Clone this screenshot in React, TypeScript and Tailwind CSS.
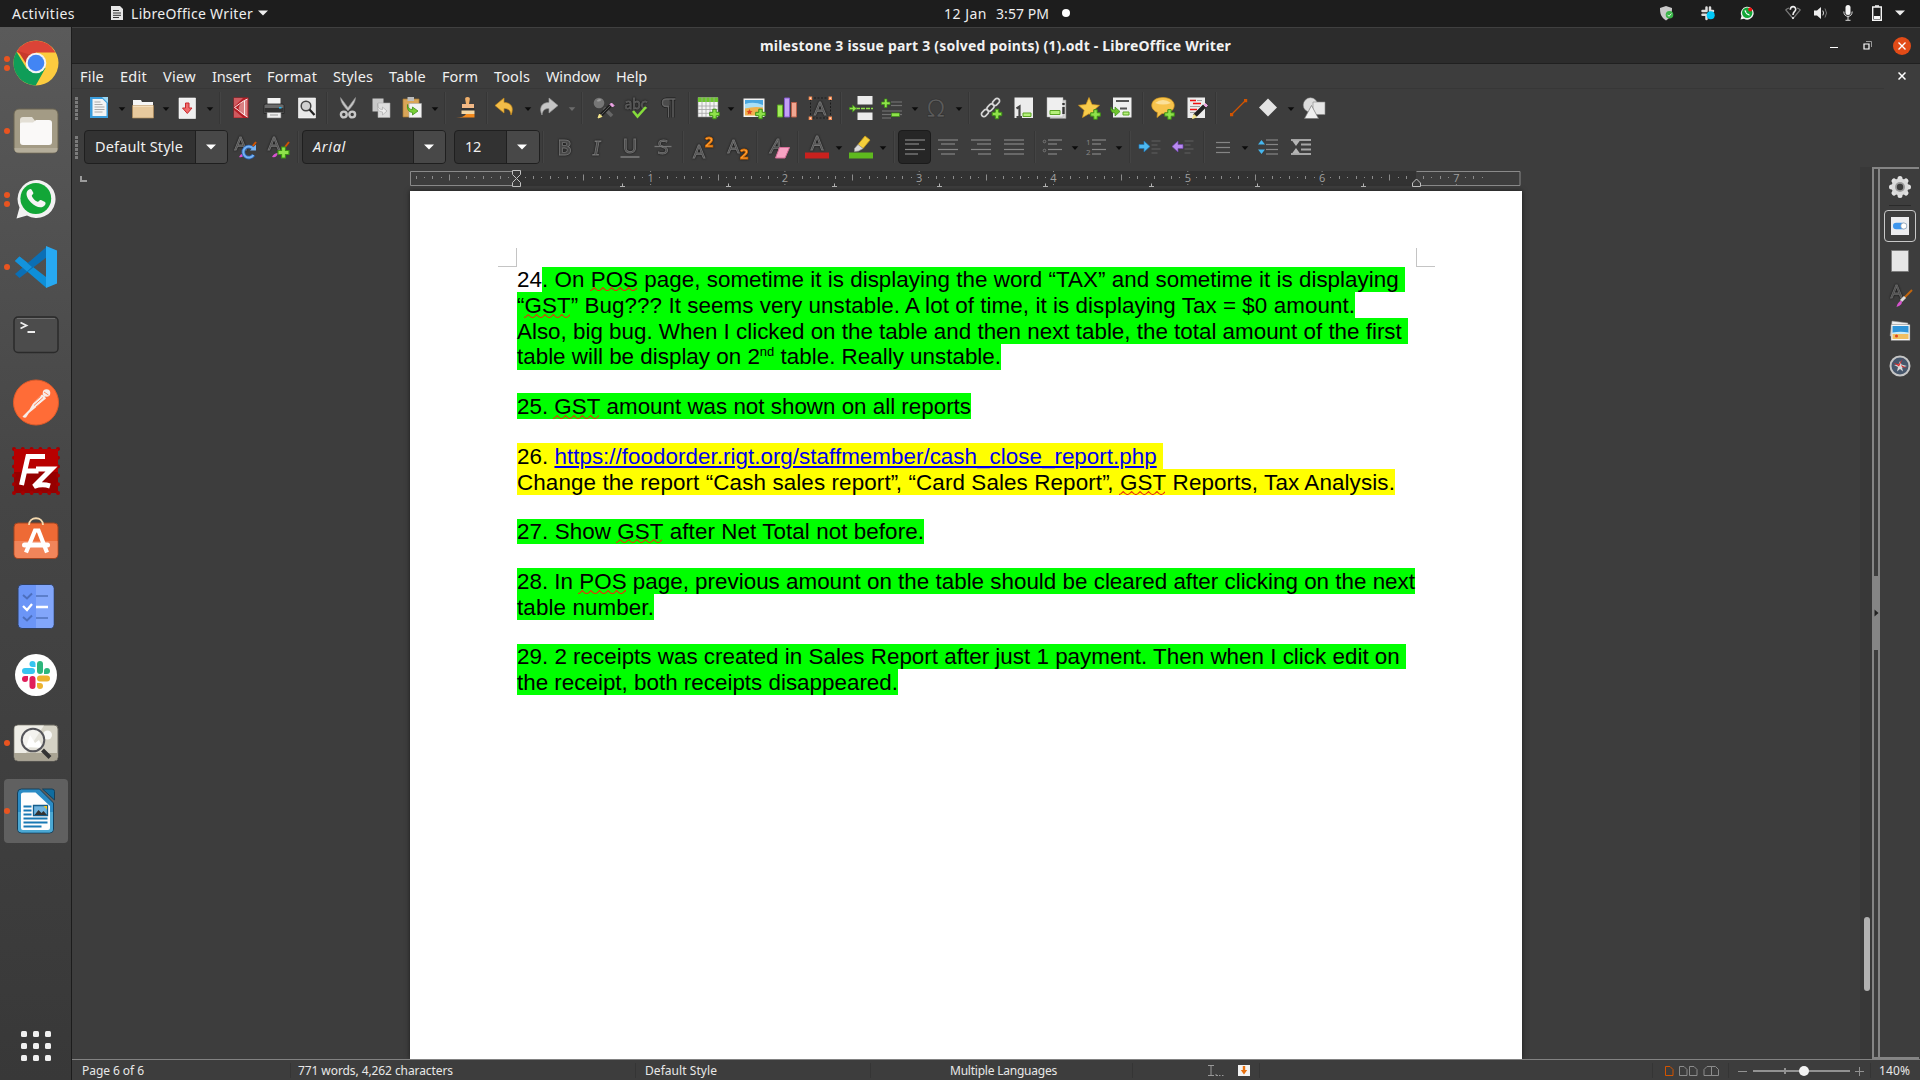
import React, { useLayoutEffect, useRef, useState } from 'react';

type Kids = { children?: React.ReactNode };

/* Text that is tracked in or out so that it fills the given width. */
function Fit({ w, className = '', children }: { w: number; className?: string } & Kids) {
  const ref = useRef<HTMLSpanElement>(null);
  const [ls, setLs] = useState(0);
  useLayoutEffect(() => {
    const el = ref.current;
    if (!el) return;
    el.style.letterSpacing = '0px';
    const n = (el.textContent || '').length || 1;
    const v = (w - el.getBoundingClientRect().width) / n;
    el.style.letterSpacing = v + 'px';
    setLs(v);
  }, [w]);
  return (
    <span ref={ref} className={'inline-block whitespace-pre ' + className} style={{ letterSpacing: ls }}>
      {children}
    </span>
  );
}

function Ic({ className = '', children }: { className?: string } & Kids) {
  return (
    <svg viewBox="0 0 24 24" fill="none" className={'h-6 w-6 shrink-0 overflow-visible ' + className}>
      {children}
    </svg>
  );
}

function Arrow({ className = '', dim = false }: { className?: string; dim?: boolean }) {
  return (
    <svg viewBox="0 0 8 24" className={'h-6 w-2 shrink-0 overflow-visible ' + className}>
      <path d="M.7 11.2h6.6L4 15z" fill={dim ? '#6c6c6c' : '#0c0c0c'} />
    </svg>
  );
}

function Sep({ className = '' }: { className?: string }) {
  return <div className={'h-8 w-0.5 shrink-0 border-r border-[#444] bg-[#363636] ' + className} />;
}

function Grip() {
  return (
    <div className="ml-[3px] flex w-[3px] shrink-0 flex-col gap-px">
      {[0, 1, 2, 3, 4, 5].map((i) => (
        <i key={i} className="h-[3px] w-[3px] bg-[#7b7b7b]" />
      ))}
    </div>
  );
}

const Plus = ({ x, y }: { x: number; y: number }) => (
  <path
    transform={`translate(${x} ${y})`}
    d="M-1.7-4.8h3.4v3.1h3.1v3.4H1.7v3.1h-3.4V1.7h-3.1v-3.4h3.1z"
    fill="#8fe24a"
    stroke="#3c8f16"
    strokeWidth="1"
  />
);

const HLines = ({ rows, c = '#858585' }: { rows: number[][]; c?: string }) => (
  <>
    {rows.map((r, i) => (
      <path key={i} d={`M${r[0]} ${r[1]}h${r[2]}`} stroke={c} strokeWidth="1.2" />
    ))}
  </>
);

/* Toolbar letter: a dark outer rim under a grey contour. */
function GlyphText({ x, y, size, children, fill = '#484848', stroke = '#757575', serif = false, italic = false, bold = false }: any) {
  const shared = {
    x,
    y,
    fontSize: size,
    fontFamily: serif ? 'Liberation Serif, serif' : 'Open Sans, sans-serif',
    fontStyle: italic ? 'italic' : 'normal',
    fontWeight: bold ? 700 : 400,
    textAnchor: 'middle' as const,
  };
  return (
    <text {...shared} fill={fill} stroke={stroke} strokeWidth=".8" className="drop-shadow-[0_0_1px_#111]">
      {children}
    </text>
  );
}

function Combo({ className, label, w, italic = false, textW }: { className: string; label: string; w: string; italic?: boolean; textW: number }) {
  return (
    <div className={'flex h-[34px] shrink-0 overflow-hidden rounded-[4px] border border-[#1f1f1f] bg-[#323232] text-[14.5px] ' + className}>
      <div className={'flex items-center pl-2.5 ' + w + (italic ? ' italic' : '')}>
        <Fit w={textW}>{label}</Fit>
      </div>
      <div className="flex flex-1 items-center justify-center border-l border-[#1f1f1f] bg-[#484848] pr-0.5">
        <svg viewBox="0 0 10 6" className="h-1.5 w-2.5">
          <path d="M0 .5h10L5 5.5z" fill="#fff" />
        </svg>
      </div>
    </div>
  );
}

/* ---------- top panel ---------- */
function TopBar() {
  return (
    <header className="flex h-[27px] shrink-0 items-center bg-[#1d1d1d] pb-px text-[14px] text-[#eee]">
      <Fit w={63} className="ml-3">Activities</Fit>
      <svg viewBox="0 0 12 14" className="ml-9 h-[14px] w-3">
        <path d="M0 0h9l3 3v11H0z" fill="#e6e6e6" />
        <path d="M2 4.5h6M2 7h8M2 9.300h8M2 11.500h6" stroke="#333" strokeWidth="1" />
      </svg>
      <Fit w={122} className="ml-2">LibreOffice Writer</Fit>
      <svg viewBox="0 0 10 6" className="ml-[5px] h-1.5 w-2.5"><path d="M0 .5h10L5 5.500z" fill="#eee" /></svg>
      <div className="ml-[676px] flex items-center">
        <Fit w={43}>12 Jan</Fit>
        <Fit w={53} className="ml-[9px]">3:57 PM</Fit>
        <i className="ml-[13px] h-2 w-2 rounded-full bg-white" />
      </div>
      <div className="ml-auto flex items-center pr-[15px]">
        <svg viewBox="0 0 14 15" className="mr-px h-[15px] w-[14px] overflow-visible">
          <path d="M6 0l6 2c0 6-1 9-6 12.500C1 11 0 8 0 2z" fill="#c9c9c9" />
          <circle cx="9.500" cy="8.800" r="3.800" fill="#3bb54a" />
          <path d="M7.600 8.800l1.400 1.500 2.400-2.700" stroke="#fff" strokeWidth=".9" fill="none" />
        </svg>
        <svg viewBox="0 0 14 14" className="ml-[26px] h-[14px] w-[14px] overflow-visible">
          <path d="M5.500 1.500v3.500M1.500 5h3.500M9 1.500v3.500M12 5h-1.500M1.500 8.800h3.500M5.500 10v3" stroke="#ddd" strokeWidth="2.500" strokeLinecap="round" />
          <circle cx="9.700" cy="9.200" r="4" fill="#00c8f8" />
        </svg>
        <svg viewBox="0 0 14 14" className="ml-[25px] h-[14px] w-[14px]">
          <path d="M.5 13.500l1-3.500A6.400 6.400 0 1 1 4 12.700z" fill="#f2f2f2" />
          <circle cx="7.200" cy="6.800" r="5.200" fill="#12a637" />
          <path d="M4.800 4c-1 1.500 2.500 6 5 5.500l-.8-1.800-1 .3-2-2 .4-1z" fill="#fff" />
          <circle cx="10.200" cy="3.500" r="2" fill="#f21212" />
        </svg>
        <svg viewBox="0 0 16 14" className="ml-[31px] h-[14px] w-4 overflow-visible">
          <path d="M4 2Q2 2.600.8 4L8 12.500 15.200 4Q14 2.600 12 2" fill="none" stroke="#777" strokeWidth="1.200" />
          <path d="M5.300 3.700C5.500-.3 10.800-.3 10.700 3.400 10.700 5.500 8 5.500 8 9M7 12h2" fill="none" stroke="#eee" strokeWidth="1.600" />
        </svg>
        <svg viewBox="0 0 16 14" className="ml-[12px] h-[14px] w-4">
          <path d="M1 4.500h3L8 1v12L4 9.500H1z" fill="#eee" />
          <path d="M9.800 4.600q1.500 2.400 0 4.800" stroke="#ddd" fill="none" /><path d="M12 2.500q3 4.500 0 9" stroke="#777" fill="none" />
        </svg>
        <svg viewBox="0 0 10 16" className="ml-[14px] h-4 w-2.5">
          <rect x="2.500" y="0" width="5" height="10" rx="2.500" fill="#f5f5f5" />
          <path d="M.8 6.500C.8 13 9.200 13 9.200 6.500M5 11v4M2.500 15.300h5" stroke="#ddd" fill="none" />
        </svg>
        <svg viewBox="0 0 10 16" className="ml-[19px] h-4 w-2.5">
          <path d="M.7 2h8.600v13.300H.7z" stroke="#f5f5f5" strokeWidth="1.400" fill="none" /><path d="M3 .3h4v1.400H3zM2 11h6v3H2z" fill="#f5f5f5" />
        </svg>
        <svg viewBox="0 0 10 6" className="ml-[13px] h-1.5 w-2.5"><path d="M0 .5h10L5 5.500z" fill="#eee" /></svg>
      </div>
    </header>
  );
}

/* ---------- dock ---------- */
function DockItem({ dots = 0, active = false, children }: { dots?: number; active?: boolean } & Kids) {
  return (
    <div className="relative flex h-[68px] w-full shrink-0 items-center justify-center">
      <div className={'flex h-16 w-16 items-center justify-center rounded ' + (active ? 'bg-[#606060]' : '')}>
        <svg viewBox="0 0 48 48" fill="none" className="h-12 w-12">{children}</svg>
      </div>
      <div className="absolute left-1 flex h-full flex-col items-center justify-center gap-[3px]">
        {Array.from({ length: dots }).map((_, i) => (
          <i key={i} className="h-1.5 w-1.5 rounded-full bg-[#e95420]" />
        ))}
      </div>
    </div>
  );
}

function Dock() {
  return (
    <nav className="flex w-[72px] shrink-0 flex-col border-r border-[#1c1c1c] bg-linear-to-b from-[#5a5a5a] via-[#454545] via-45% to-[#383838] pt-0.5">
      <DockItem dots={2}>
        <circle cx="24" cy="24" r="22.500" fill="#fccb3f" />
        <path d="M24 24L4.500 12.700A22.500 22.500 0 0 1 43.500 13.500H24z" fill="#db4437" />
        <path d="M24 24l9.500 5-9.800 17.400A22.500 22.500 0 0 1 4.500 12.700L15 30z" fill="#0f9d58" />
        <path d="M6 12l9 14 4-10z" fill="#c73a2e" />
        <circle cx="24" cy="24" r="10.300" fill="#f4f4f4" /><circle cx="24" cy="24" r="8.300" fill="#4285f4" />
      </DockItem>
      <DockItem dots={1}>
        <rect x="2" y="2" width="44" height="44" rx="5" fill="#a39b85" stroke="#6b6553" />
        <path d="M2.500 41h43v1c0 3-2 3.500-4 3.500h-35c-2 0-4-.5-4-3.500z" fill="#b5ae9b" />
        <path d="M8 13q0-3 3-3h9l4 5v6H8z" fill="#e3dfd5" />
        <path d="M8 17q0-1.500 2-1.500h11l3-2.500h13q3 0 3 3v19q0 3-3 3H11q-3 0-3-3z" fill="#faf9f8" />
      </DockItem>
      <DockItem dots={2}>
        <path d="M4.500 43.500l3-11A19 19 0 1 1 15 40.500z" fill="#f2f2f2" />
        <circle cx="23.800" cy="23.500" r="15.400" fill="#12a637" />
        <path d="M17 14.500c-4 2-3 8 2 13s11 6.500 14 2.500c1-1.500.5-2.500 0-3l-4-2c-2-.5-2 2.500-4 1.500-2-.800-4-3-5-5-.8-2 2-2 1.200-4l-1.700-3c-.5-1-2-.5-2.500 0z" fill="#f5f5f5" />
      </DockItem>
      <DockItem dots={1}>
        <path d="M3 18l4.500-4.500L34 34l.5 11z" fill="#0e8fd8" />
        <path d="M3 31l4.500 4L35 14V3.500z" fill="#0b6fb5" />
        <path d="M3 18l4.500-4.500L20 24l-5 4.500z" fill="#1493dc" />
        <path d="M34 3l11 4.500v33L34 45z" fill="#27a9f2" />
      </DockItem>
      <DockItem>
        <rect x="2" y="6" width="44" height="35.500" rx="4" fill="#4c4c4c" stroke="#2a2a2a" strokeWidth="1.500" />
        <path d="M5 7.500h38" stroke="#6e6e6e" />
        <path d="M8.500 11.500l6 3-6 3M15.500 21h7.500" stroke="#eee" strokeWidth="1.800" />
      </DockItem>
      <DockItem>
        <circle cx="24" cy="23.500" r="22.500" fill="#ff6c37" stroke="#df5a29" />
        <circle cx="34.500" cy="14" r="3.800" fill="#f7ece8" />
        <path d="M30 15.500q3 1 4 4l-9 8-8 6.500-3 4.500q-3 .5-3.500-1l7-7 4-7z" fill="#f7ece8" />
        <path d="M32 13l4.500 3M31 18.500l-9 8M28.500 17.500l-8 7M33 21l-9 7" stroke="#ff6c37" strokeWidth=".8" />
      </DockItem>
      <DockItem>
        <rect x="2" y="2" width="44" height="44" fill="#960000" stroke="#a30000" strokeWidth="4" strokeDasharray="0 8.800" strokeLinecap="round" />
        <path d="M2 2h44v23H2z" fill="#b80000" />
        <path d="M9.500 38L16 9.500h17M12.500 24h14M24 22h15.500L22 39.500q8-3 16-.5" stroke="#fff" strokeWidth="5" strokeLinejoin="miter" />
      </DockItem>
      <DockItem>
        <rect x="2" y="8" width="44" height="35.500" rx="4" fill="#ee6a35" stroke="#a04421" />
        <path d="M2.500 26h43v13q0 4-4 4h-35q-4 0-4-4z" fill="#f2855a" />
        <path d="M17 10c0-9 14-9 14 0" stroke="#f5d9ae" strokeWidth="1.800" />
        <path d="M14 37.500l9-22h3.500l8.500 22" stroke="#fff" strokeWidth="4.200" />
        <rect x="10" y="27.500" width="28" height="5" rx="2.500" fill="#fff" />
      </DockItem>
      <DockItem>
        <rect x="6" y="1.500" width="36" height="44" rx="4" fill="#6b95f7" stroke="#31405f" />
        <path d="M24 2h14q3.500 0 3.500 3.500v36q0 3.500-3.500 3.500H24z" fill="#82a6fa" />
        <path d="M11 12l4 3.500 5-5M11 34l4 3.500 5-5" stroke="#4d6fbe" strokeWidth="2" /><path d="M24 13h12M24 35h12" stroke="#5c7fcb" strokeWidth="1.800" />
        <path d="M11 23l4 4 5-6M24 24h12" stroke="#fff" strokeWidth="2.300" />
      </DockItem>
      <DockItem>
        <circle cx="24" cy="24" r="21" fill="#fff" />
        <g strokeWidth="6" strokeLinecap="round">
          <path d="M13 20h7" stroke="#36c5f0" /><path d="M28 13v7" stroke="#2eb67d" />
          <path d="M28 27.500h7" stroke="#ecb22e" /><path d="M20.500 28v7" stroke="#e01e5a" />
        </g>
        <path d="M20.500 16h3v-3a3 3 0 1 0-3 3z" fill="#36c5f0" /><path d="M32 23h3a3 3 0 1 0-3-3z" fill="#2eb67d" />
        <path d="M25 32v3a3 3 0 1 0 3-3z" fill="#ecb22e" /><path d="M16 25h-3a3 3 0 1 0 3 3z" fill="#e01e5a" />
      </DockItem>
      <DockItem dots={1}>
        <rect x="2" y="6" width="44" height="36" rx="4" fill="#d5d2c5" stroke="#6b6860" />
        <path d="M2.500 8q1-1.500 3.500-1.500h26L14 34H2.500z" fill="#eeede6" /><path d="M2.500 34h43v4q0 3.500-4 3.500h-35q-4 0-4-3.500z" fill="#a9a493" />
        <circle cx="35.500" cy="16" r="4.500" fill="#f7f7f5" /><path d="M14 28l4-12 5 8 4-3 4 8z" fill="#fff" />
        <circle cx="21" cy="21" r="11.300" fill="#fff" fillOpacity=".35" stroke="#55555a" strokeWidth="2" />
        <path d="M30.500 31l7.500 7.500" stroke="#333" strokeWidth="4" />
      </DockItem>
      <DockItem dots={1} active>
        <g transform="translate(-.5 0)">
          <path d="M10 2h18l14 14v26q0 4-4 4H10q-4 0-4-4V6q0-4 4-4z" fill="#2b8bc4" stroke="#173e57" />
          <path d="M6.500 25h35v17q0 3.500-4 3.500h-27q-4 0-4-3.500z" fill="#4ba8d3" />
          <path d="M31 2h9.500q2.500 0 2.500 2.500V13z" fill="#0f6c9f" stroke="#173e57" />
          <path d="M12 5.500h12L38.500 19v22q0 2-2 2h-25q-2 0-2-2V7.500q0-2 2.500-2z" fill="#fdfdfd" />
          <path d="M12 19.500h8M12 23.500h8M12 27.500h8M12 31.500h24M12 35.500h24M12 39.500h18" stroke="#1878b4" strokeWidth="1.800" />
          <path d="M22 18.500h14v10H22z" fill="#6fb3de" stroke="#155e8c" strokeWidth="1.300" /><path d="M23 28l4-5 3 3 2-2 3.500 4z" fill="#333" />
          <path d="M32 19h3.500v3.500z" fill="#f2c11d" />
        </g>
      </DockItem>
      <div className="mt-auto mb-[19px] grid grid-cols-3 gap-1.5 self-center">
        {Array.from({ length: 9 }).map((_, i) => (
          <i key={i} className="h-1.5 w-1.5 rounded-[1.5px] bg-[#f0f0f0]" />
        ))}
      </div>
    </nav>
  );
}

/* ---------- window chrome ---------- */
function TitleBar() {
  return (
    <div className="relative flex h-[37px] shrink-0 items-center border-t border-b border-t-[#404040] border-b-[#202020] bg-[#2c2c2c] text-[14px] font-bold text-[#f2f2f2]">
      <Fit w={471} className="ml-[688px]">milestone 3 issue part 3 (solved points) (1).odt - LibreOffice Writer</Fit>
      <div className="ml-auto flex items-center pr-[9px]">
        <i className="mt-1 h-px w-2 bg-white" />
        <svg viewBox="0 0 9 9" className="ml-[25px] mr-px h-[9px] w-[9px] overflow-visible">
          <path d="M1 3h5v5H1z" stroke="#fff" strokeWidth="1.200" fill="none" /><path d="M3 .5h5.500V6" stroke="#999" fill="none" />
        </svg>
        <div className="ml-5 flex h-[18px] w-[18px] items-center justify-center rounded-full bg-[#e24b17]">
          <svg viewBox="0 0 8 8" className="h-2 w-2"><path d="M.5.5l7 7M7.500.5l-7 7" stroke="#fff" strokeWidth="1.400" /></svg>
        </div>
      </div>
    </div>
  );
}

function MenuBar() {
  return (
    <div className="flex h-6 shrink-0 items-center pr-[14px] text-[14.5px] text-[#f0f0f0]">
      <div className="flex items-center gap-4 pl-2 pt-0.5">
        <Fit w={24}>File</Fit><Fit w={27}>Edit</Fit><Fit w={33}>View</Fit><Fit w={39}>Insert</Fit>
        <Fit w={50}>Format</Fit><Fit w={40}>Styles</Fit><Fit w={37}>Table</Fit><Fit w={36}>Form</Fit>
        <Fit w={36}>Tools</Fit><Fit w={54}>Window</Fit><Fit w={31}>Help</Fit>
      </div>
      <svg viewBox="0 0 8 8" className="ml-auto h-2 w-2"><path d="M.5.5l7 7M7.500.5l-7 7" stroke="#fff" strokeWidth="1.500" /></svg>
    </div>
  );
}

function StandardBar() {
  return (
    <div className="mr-9 flex h-[39px] shrink-0 items-center border-t border-[#373737]">
      <Grip />
      <Ic className="ml-[9px]">
        <path d="M3 1h18v21H3z" fill="#3b9ddd" /><path d="M5.500 3h10l4 4v13h-14z" fill="#f4f4f4" /><path d="M15 1h6v6z" fill="#9bd8f5" />
        <path d="M7.500 6h6M7.500 8.500h8M7.500 11h10M7.500 13.500h10M7.500 16h8" stroke="#aaa" />
      </Ic>
      <Arrow className="ml-[7px]" />
      <Ic className="ml-[5px]">
        <path d="M2 4h8l1 2h11v6H2z" fill="#f6f6f6" /><path d="M1.500 9.500h21V22h-21z" fill="#e7c99d" stroke="#b08d5b" strokeWidth=".7" /><path d="M2 10.200h20" stroke="#f8e6ca" />
      </Ic>
      <Arrow className="ml-[7px]" />
      <Ic className="ml-[5px]">
        <path d="M4 2h16.500v20.500H4z" fill="#efefef" stroke="#fff" strokeWidth=".6" />
        <path d="M10.500 7h3.500v5h3l-4.700 5.500L7.500 12h3z" fill="#f06a6a" stroke="#c9282c" />
      </Ic>
      <Arrow className="ml-[7px]" />
      <Sep className="ml-[5px]" />
      <Ic className="ml-2">
        <path d="M4.500 1.500h15V22h-15z" fill="#b51e26" /><path d="M5 2h9L5 11zM5 14l9 7.500H5z" fill="#cf5a5f" /><path d="M18.500 3v18c-5-2-8-5-9-9 1-4 4-7 9-9z" fill="#d98082" />
        <path d="M18.500 3c-5 2-8 5-13 8.500 5 3 8 7 13 9.500M15.500 5v14" stroke="#fbeaea" strokeWidth="1" />
      </Ic>
      <Ic className="ml-[9px]">
        <path d="M5.500 2h13v7.500h-13z" fill="#f3f3f3" /><path d="M2 9.500q0-1.500 2-1.500h16q2 0 2 1.500v8H2z" fill="#6a6a6a" stroke="#222" strokeWidth=".8" />
        <path d="M2.500 12h19v4.500h-19z" fill="#333" /><path d="M17 11h2.500v1.500H17z" fill="#25b7f0" /><path d="M5 16.500h14V22H5z" fill="#eee" stroke="#777" strokeWidth=".6" /><path d="M8 19h8" stroke="#999" />
      </Ic>
      <Ic className="ml-[9px]">
        <path d="M3.500 2h17v20h-17z" fill="#e9e9e9" stroke="#fff" strokeWidth=".6" />
        <circle cx="11" cy="10" r="4.800" fill="#cfcfcf" stroke="#444" strokeWidth="1.500" /><path d="M14.500 13.500l5 5.500" stroke="#222" strokeWidth="2.200" />
      </Ic>
      <Sep className="ml-[7px]" />
      <Ic className="ml-2">
        <path d="M4.500 1.500c0 5 3.500 9 7.500 13.500 4-4.500 7.500-8.500 7.500-13.500L12 11.500z" fill="#c4c4c4" stroke="#8b8b8b" strokeWidth=".6" />
        <circle cx="7.800" cy="18.500" r="2.900" stroke="#c8c8c8" strokeWidth="2.400" /><circle cx="16.200" cy="18.500" r="2.900" stroke="#c8c8c8" strokeWidth="2.400" />
      </Ic>
      <Ic className="ml-[9px]">
        <path d="M3.500 2.500h11v13h-11z" fill="#c9c9c9" /><path d="M9 7h12v14.500H9z" fill="#dedede" stroke="#aaa" strokeWidth=".6" />
        <path d="M8.500 7.500q0 6 5 6v-2.500l4.500 4-4.500 4V16q-6 0-5-8.500z" fill="#efefef" stroke="#aaa" strokeWidth=".7" />
      </Ic>
      <Ic className="ml-[7px]">
        <path d="M3 3h16v18H3z" fill="#d9a558" stroke="#a87832" strokeWidth=".7" /><path d="M7.500 1h6.500v4H7.500z" fill="#bbb" /><path d="M9 7.500h12.500V21.500H9z" fill="#f2f2f2" stroke="#aaa" strokeWidth=".6" />
        <path d="M7.500 8.500q0 5 5 5V11l5.500 4-5.500 4v-2.500q-6-.500-5-8z" fill="#78cf36" stroke="#3f8f16" strokeWidth=".8" />
      </Ic>
      <Arrow className="ml-[7px]" />
      <Sep className="ml-[5px]" />
      <Ic className="ml-[9px]">
        <path d="M12.500 1q3 0 2.200 3l-.7 4H11l-.7-4q-.8-3 2.200-3z" fill="#f0b06b" /><path d="M7 8h12v4H7z" fill="#f2b987" /><path d="M6.500 12h13v2.500h-13z" fill="#333" /><path d="M6.500 14.500h13V18h-13z" fill="#f4d7a4" />
        <path d="M1 21.500q8 0 10-3.500h8.500v3.500z" fill="#f58a1c" />
      </Ic>
      <Sep className="ml-[7px]" />
      <Ic className="ml-1">
        <path d="M3 9.500L12 2v4.500c8 0 10 6 7 12.500-.5-5-3-6.500-7-6.500V17z" fill="#f3bd48" stroke="#c58a1a" strokeWidth=".7" />
      </Ic>
      <Arrow className="ml-2" />
      <Ic className="ml-[5px]">
        <path d="M21 9.500L12 2v4.500c-8 0-10 6-7 12.500.5-5 3-6.500 7-6.500V17z" fill="#c6c6c6" stroke="#9a9a9a" strokeWidth=".7" />
      </Ic>
      <Arrow className="ml-[7px]" dim />
      <Sep className="ml-[5px]" />
      <Ic className="ml-[9px]">
        <circle cx="7" cy="7" r="5.300" fill="#767676" /><path d="M4.500 5q2-3 5-1.500-1 3-5 1.500z" fill="#9c9c9c" /><path d="M12 12l8 8" stroke="#666" strokeWidth="3.500" />
        <path d="M8 20l11-11" stroke="#1f1f1f" strokeWidth="3.800" /><path d="M9 19l9-9" stroke="#666" strokeWidth=".8" /><path d="M18 8.500l2.500 2.500 1.500-1.500-2.500-2.500z" fill="#f0a5e8" stroke="#f0a5e8" /><path d="M6 22l1.500-4 2.500 2.500z" fill="#f5e68c" stroke="#f5e68c" />
      </Ic>
      <Ic className="ml-2">
        <GlyphText x={12} y={13} size={14} stroke="#5c5c5c">abc</GlyphText>
        <path d="M9 15l4.500 5.500L22 11" stroke="#86dd3b" strokeWidth="2.600" />
      </Ic>
      <Ic className="ml-[9px]">
        <path d="M18.500 3H9.500c-5.500 0-5.500 7.500 0 7.500h2v11M16 3v18.500" stroke="#1c1c1c" strokeWidth="3" /><path d="M9.500 3h3v7.500h-3c-5 0-5-7.500 0-7.500z" fill="#4c4c4c" /><path d="M18.500 3H9.500c-5.500 0-5.500 7.500 0 7.500h2v11M16 3v18.500" stroke="#656565" strokeWidth="1.400" />
      </Ic>
      <Sep className="ml-[7px]" />
      <Ic className="ml-1.5">
        <path d="M2 1.500h20V21H2z" fill="#f4f4f4" stroke="#888" strokeWidth=".6" /><path d="M2 1.500h20V6H2z" fill="#6cc72b" />
        <path d="M6 1.500V21M10 1.500V21M14 1.500V21M18 1.500V21M2 10h20M2 13.500h20M2 17.300h20" stroke="#a5a5a5" strokeWidth=".8" /><Plus x={18.500} y={18} />
      </Ic>
      <Arrow className="ml-[7px]" />
      <Ic className="ml-[7px]">
        <path d="M1.500 2.500h21V21h-21z" fill="#f4f4f4" /><path d="M3 4h18v7H3z" fill="#4aa6e0" /><path d="M3 11.500q6-2.500 18-.5V19.500H3z" fill="#f0b24e" /><path d="M3 8q9-3 18 1v2.500q-9-1.500-18 1z" fill="#aadff5" /><path d="M7.500 13l1 2 2 .3-1.500 1.200.3 2-1.800-1-1.800 1 .3-2L4.500 15.300l2-.3z" fill="#e0441e" /><Plus x={18.500} y={18} />
      </Ic>
      <Ic className="ml-[9px]">
        <path d="M2.500 9h5v12h-5z" fill="#a3ec5a" stroke="#5ba523" /><path d="M9.500 2h5v19h-5z" fill="#c3a0f5" stroke="#8459c9" /><path d="M16.500 6.500h5V21h-5z" fill="#f0a792" stroke="#b9604a" />
      </Ic>
      <Ic className="ml-[9px]">
        <path d="M2.500 2h20v20h-20z" stroke="#1c1c1c" strokeDasharray="2 1.500" /><GlyphText x={12} y={18.500} size={19}>A</GlyphText>
        <path d="M.7.500h3.500V4H.7zM20.500.5H24V4h-3.500zM.7 20.500h3.500V24H.7zM20.500 20.500H24V24h-3.500z" fill="#f58b52" /><path d="M1.800 1.600h1.300v1.300H1.800zM21.600 1.600h1.300v1.300h-1.300zM1.800 21.600h1.300v1.300H1.800zM21.600 21.600h1.300v1.300h-1.300z" fill="#fde0cf" />
      </Ic>
      <Sep className="ml-2" />
      <Ic className="ml-[7px]">
        <path d="M8.500 0h15v8.500h-15zM8.500 16.500h15V24h-15z" fill="#ececec" /><path d="M7 12.500h17" stroke="#8fe24a" strokeWidth="1.500" strokeDasharray="4 1" /><path d="M.5 11.500h3V9l4 3.500-4 3.500v-2.500h-3z" fill="#8fe24a" stroke="#3c8f16" strokeWidth=".7" />
      </Ic>
      <Ic className="ml-2">
        <HLines rows={[[10, 6, 11], [10, 9.5, 11], [1, 15, 20], [1, 18.500, 20], [1, 22, 9]]} c="#707070" /><path d="M3.500 3h2.500v3h3v2.500h-3v3H3.500v-3h-3V6h3z" fill="#8fe24a" stroke="#3c8f16" strokeWidth=".7" /><path d="M10.500 17h8v3.500h-8z" fill="#8fe24a" stroke="#3c8f16" strokeWidth=".7" />
      </Ic>
      <Arrow className="ml-1.5" />
      <Ic className="ml-[5px]"><text x="12" y="20.500" fontSize="24" textAnchor="middle" fontFamily="DejaVu Sans, sans-serif" fill="#5c5c5c" stroke="#2a2a2a" strokeWidth=".5">Ω</text></Ic>
      <Arrow className="ml-[7px]" />
      <Sep className="ml-[5px]" />
      <Ic className="ml-[9px]">
        <g stroke="#d6d6d6" strokeWidth="1.700"><rect x="-2.500" y="-4" width="5" height="8" rx="2.500" transform="translate(6 17) rotate(45)" /><rect x="-2.500" y="-4" width="5" height="8" rx="2.500" transform="translate(11.500 11.500) rotate(45)" /><rect x="-2.500" y="-4" width="5" height="8" rx="2.500" transform="translate(17 6) rotate(45)" /></g><Plus x={18} y={18} />
      </Ic>
      <Ic className="ml-[9px]">
        <path d="M2.500 1.500H21V22H2.500z" fill="#ececec" /><path d="M4.500 12.500l3-2V21M4.500 21h5.500" stroke="#444" strokeWidth="2.200" /><path d="M11 17h8v3.500h-8z" fill="#b5f07a" stroke="#5ba523" />
      </Ic>
      <Ic className="ml-2">
        <path d="M6 4h16v18.500H6z" fill="#d5d5d5" stroke="#888" strokeWidth=".6" /><path d="M3 1.500h16V21H3z" fill="#efefef" stroke="#aaa" strokeWidth=".5" /><path d="M19.500 7v2M19.500 11v7" stroke="#333" strokeWidth="2.400" /><path d="M6 14.500h10v4H6z" fill="#b5f07a" stroke="#5ba523" />
      </Ic>
      <Ic className="ml-[9px]">
        <path d="M12 1.500l3 7 7.500.8-5.700 5 1.700 7.200-6.500-3.800-6.500 3.800 1.700-7.200-5.700-5 7.500-.8z" fill="#f7cb4b" stroke="#d59a1c" strokeWidth=".7" /><Plus x={18.500} y={18.500} />
      </Ic>
      <Ic className="ml-[9px]">
        <path d="M3 1.500h18.500v20H3z" fill="#efefef" /><path d="M6 5h13M10 12.500h7" stroke="#555" strokeWidth="1.800" /><path d="M13 16h6v3h-6z" fill="#b5f07a" stroke="#5ba523" /><path d="M1 11q0 3 4 3v-3l5 4.500L5 20v-3q-5 0-4-6z" fill="#6fc42e" stroke="#3c8f16" strokeWidth=".7" />
      </Ic>
      <Sep className="ml-2" />
      <Ic className="ml-[7px]">
        <path d="M12 1.500c15 0 15 16 0 16h-1l-5 4 .5-5C-2.500 13-1 1.500 12 1.500z" fill="#f7c34c" stroke="#d59a1c" strokeWidth=".7" /><path d="M4 7q8-6 16 0-8 3-16 0z" fill="#fbe09a" /><Plus x={18.500} y={18.500} />
      </Ic>
      <Ic className="ml-2.5">
        <path d="M2.500 1.500H20V22H2.500z" fill="#ececec" /><path d="M5 4.500h6M8 7.500h8M5 13.500h7" stroke="#e11" strokeWidth="1.300" /><path d="M12 4.500h5M5 10.500h10M5 16.500h5" stroke="#999" strokeWidth=".9" />
        <path d="M9.500 20l10-10" stroke="#222" strokeWidth="4" /><path d="M19 9l2 2 1.500-1.500-2-2z" fill="#e8a5dc" stroke="#e8a5dc" /><path d="M7.500 22.500l1.500-4 2.500 2.500z" fill="#f5e68c" stroke="#f5e68c" />
      </Ic>
      <Sep className="ml-1.5" />
      <Ic className="ml-[9px]"><path d="M5.500 18.500l14-14" stroke="#d35400" strokeWidth="1.200" /><path d="M4 17h3.200v3.200H4zM18 3h3.200v3.200H18z" fill="#d35400" /></Ic>
      <Ic className="ml-1.5"><path d="M12 2.500L21 11.500l-9 9-9-9z" fill="#e4e4e4" /></Ic>
      <Arrow className="ml-[7px]" />
      <Ic className="ml-[7px]">
        <circle cx="8.500" cy="9" r="7.200" fill="#dcdcdc" stroke="#999" strokeWidth=".5" /><path d="M11 6h12v12.500H11z" fill="#e6e6e6" stroke="#888" strokeWidth=".6" /><path d="M9.500 9.500l7 13h-14z" fill="#f0f0f0" stroke="#777" strokeWidth=".7" />
      </Ic>
    </div>
  );
}

function FormatBar() {
  return (
    <div className="flex h-[40px] shrink-0 items-center">
      <Grip />
      <Combo className="ml-1.5 w-36" w="w-[110px]" label="Default Style" textW={88} />
      <Ic className="ml-[5px] mr-px">
        <GlyphText x={7.500} y={14.500} size={19}>A</GlyphText><path d="M19 12l4-5" stroke="#d35400" strokeWidth="2" /><path d="M6 22q2-4 5-3-1 4-5 3z" fill="#d653cf" />
        <path d="M20 13.500a5.500 5.500 0 1 0 .5 6.500" stroke="#2c66b8" strokeWidth="3.600" /><path d="M20 13.500a5.500 5.500 0 1 0 .5 6.500" stroke="#76b2f2" strokeWidth="2" /><path d="M17 15.500h6v-6z" fill="#76b2f2" />
      </Ic>
      <Ic className="ml-2">
        <GlyphText x={8} y={14.500} size={19}>A</GlyphText><path d="M19 12l4-5" stroke="#d35400" strokeWidth="2" /><path d="M6 22q2-4 6-4-1 5-6 4z" fill="#d653cf" /><g transform="translate(17.500 17.500) scale(1.150)"><Plus x={0} y={0} /></g>
      </Ic>
      <Sep className="ml-[7px]" />
      <Combo className="ml-[3px] w-36" w="w-[110px]" label="Arial" italic textW={33} />
      <Combo className="ml-2 w-[86px]" w="w-[51px]" label="12" textW={16} />
      <Sep className="ml-0.5" />
      <Ic className="ml-[9px]"><GlyphText x={11.500} y={19.500} size={21} bold>B</GlyphText></Ic>
      <Ic className="ml-2"><GlyphText x={11.500} y={19.500} size={22} italic serif>I</GlyphText></Ic>
      <Ic className="ml-[9px]"><GlyphText x={12} y={17.500} size={20}>U</GlyphText><path d="M2.500 22h19" stroke="#8a8a8a" strokeWidth="1.300" /></Ic>
      <Ic className="ml-[9px]"><GlyphText x={12} y={19} size={20}>S</GlyphText><path d="M3.500 11.500h17" stroke="#757575" strokeWidth="1.300" /></Ic>
      <Sep className="ml-[7px]" />
      <Ic className="ml-[7px]"><GlyphText x={8} y={22.500} size={19}>A</GlyphText><GlyphText x={18} y={12} size={15} bold fill="#ffa33a" stroke="#d66a00">2</GlyphText></Ic>
      <Ic className="ml-[11px]"><GlyphText x={7.500} y={18} size={19}>A</GlyphText><GlyphText x={18} y={23.500} size={15} bold fill="#ffa33a" stroke="#d66a00">2</GlyphText></Ic>
      <Sep className="ml-1.5" />
      <Ic className="ml-[9px]"><GlyphText x={9} y={17.500} size={20} italic>A</GlyphText><path d="M12.500 12.500h10L18 23H8.500z" fill="#f7a3c3" stroke="#d66d98" /></Ic>
      <Sep className="ml-1.5" />
      <Ic className="ml-1.5"><GlyphText x={12} y={14.500} size={20}>A</GlyphText><path d="M0 17.500h24v6H0z" fill="#c9211e" /></Ic>
      <Arrow className="ml-1.5" />
      <Ic className="ml-1.5">
        <path d="M0 17.500h24v6H0z" fill="#5eb91e" /><path d="M9 9.500l7-8.500 5 4-7 8.500z" fill="#f5cf3b" stroke="#c99a16" strokeWidth=".8" /><path d="M5.500 13.500L9 9.500l5 4-4.500 2.500-4 .5z" fill="#dcdcdc" stroke="#999" strokeWidth=".7" />
      </Ic>
      <Arrow className="ml-1.5" />
      <Sep className="ml-1.5" />
      <div className="ml-[3px] flex h-[34px] w-[33px] shrink-0 items-center justify-center rounded-[4px] border border-[#1b1b1b] bg-[#262626]">
        <Ic><HLines rows={[[2, 5, 20], [2, 9, 14], [2, 14.5, 20], [2, 19, 13]]} /></Ic>
      </div>
      <Ic className="ml-[5px]"><HLines rows={[[2, 5, 20], [5, 9, 14], [2, 14.5, 20], [5, 19, 14]]} /></Ic>
      <Ic className="ml-[9px]"><HLines rows={[[2, 5, 20], [8, 9, 14], [2, 14.5, 20], [9, 19, 13]]} /></Ic>
      <Ic className="ml-[9px]"><HLines rows={[[2, 5, 20], [2, 9, 20], [2, 14.5, 20], [2, 19, 20]]} /></Ic>
      <Sep className="ml-2" />
      <Ic className="ml-[5px]"><HLines rows={[[7, 5, 14], [7, 9, 9], [7, 14.5, 14], [7, 19, 9]]} /><circle cx="3.500" cy="6.500" r="1.300" stroke="#777" /><circle cx="3.500" cy="15.500" r="1.300" stroke="#777" /></Ic>
      <Arrow className="ml-1.5" />
      <Ic className="ml-1.5"><HLines rows={[[7, 5, 14], [7, 9, 9], [7, 14.5, 14], [7, 19, 9]]} /><text x="1" y="10" fontSize="8" fill="#888" fontFamily="Open Sans, sans-serif">1</text><text x="1" y="20" fontSize="8" fill="#888" fontFamily="Open Sans, sans-serif">2</text></Ic>
      <Arrow className="ml-1.5" />
      <Sep className="ml-1.5" />
      <Ic className="ml-[7px]"><path d="M1 9.500h5V6l6 5.500L6 17v-3.500H1z" fill="#4db8f0" stroke="#1f76b5" strokeWidth=".7" /><HLines rows={[[13.5, 6, 9], [13.500, 10, 6], [13.500, 14, 9], [13.500, 18, 6]]} c="#5a5a5a" /></Ic>
      <Ic className="ml-[9px]"><path d="M12 9.500H7V6l-6 5.500L7 17v-3.500h5z" fill="#b98af0" stroke="#7446b5" strokeWidth=".7" /><HLines rows={[[13.500, 6, 9], [13.500, 10, 6], [13.500, 14, 9], [13.500, 18, 6]]} c="#5a5a5a" /></Ic>
      <Sep className="ml-2" />
      <Ic className="ml-1.5"><HLines rows={[[5, 7.500, 14], [5, 12.500, 14], [5, 17.500, 14]]} /></Ic>
      <Arrow className="ml-1.5" />
      <Ic className="ml-[7px]"><HLines rows={[[10, 5, 12], [10, 9.500, 12], [10, 14.500, 12], [10, 19, 12]]} /><path d="M2 9.500h7L5.500 5zM2 14.500h7L5.500 19z" fill="#45b6ee" /></Ic>
      <Ic className="ml-[9px]"><path d="M2 5h20M12 9.500h10M12 14.500h10M2 19h20" stroke="#a5a5a5" strokeWidth="1.800" /><path d="M3 5.500h8L7 11zM3 18.500h8L7 13z" fill="#b5b5b5" /></Ic>
    </div>
  );
}

/* ---------- ruler ---------- */
function Ruler() {
  const inch = 134.3;
  const marks: React.ReactNode[] = [];
  for (let i = -12; i <= 115; i++) {
    const x = 106.3 + (i * inch) / 16;
    if (i === 0 || Math.abs(i - 107) < 1) continue;
    if (i % 16 === 0) {
      marks.push(
        <g key={i}>
          <text x={x} y="11" fontSize="11" textAnchor="middle" fill="#a0a0a0" fontFamily="Open Sans, sans-serif">{i / 16}</text>
          <path d={`M${x} 0v1M${x} 13v1`} stroke="#8a8a8a" strokeWidth="1" />
        </g>
      );
    } else {
      const h = i % 8 === 0 ? 3 : i % 2 === 0 ? 1.5 : 0.5;
      marks.push(<path key={i} d={`M${Math.round(x) + 0.5} ${6.5 - h}v${2 * h}`} stroke="#8c8c8c" strokeWidth="1" />);
    }
  }
  return (
    <svg viewBox="0 0 1112 17" className="ml-[338px] block h-[17px] w-[1112px] overflow-visible">
      <path d="M106 0h900v15H106z" fill="#323232" />
      {marks}
      <path d="M106 .5H.5v14H106M1006.500 .5h103.500v14h-103.500" stroke="#8a8a8a" fill="none" />
      {[0, 1, 2, 3, 4, 5, 6, 7].map((k) => (
        <path key={k} d={`M${Math.round(212 + k * 105.8)}.500 12.500v3M${Math.round(210 + k * 105.8)} 15.500h5`} stroke="#b5b5b5" fill="none" />
      ))}
      <path d="M102.500-.5h8v4l-4 4-4-4zM102.500 15.500h8v-4l-4-4-4 4zM1002.500 15.500h8v-3.500l-4-4-4 4z" fill="#3a3a3a" stroke="#c2c2c2" />
    </svg>
  );
}

/* ---------- document ---------- */
function Sq({ children }: Kids) {
  return (
    <span className="relative inline-block">
      {children}
      <svg className="absolute bottom-0.5 -left-px h-1 w-full overflow-hidden" preserveAspectRatio="xMinYMin slice" viewBox="0 0 44 4">
        <path d="M0 3.500l2-1 2-2 2 2 2 1 2-1 2-2 2 2 2 1 2-1 2-2 2 2 2 1 2-1 2-2 2 2 2 1 2-1 2-2 2 2 2 1 2-1 2-2 2 2" stroke="#e8300c" fill="none" />
      </svg>
    </span>
  );
}

function Line({ w, yellow = false, tall = true, lead, children }: { w: number; yellow?: boolean; tall?: boolean; lead?: React.ReactNode } & Kids) {
  return (
    <div className={'flex ' + (tall ? 'h-[26px] leading-[28px]' : 'h-[25px] leading-[26px]')}>
      {lead}
      <Fit w={w} className={'h-full shrink-0 ' + (yellow ? 'bg-[#ffff00]' : 'bg-[#00ff00]')}>{children}</Fit>
    </div>
  );
}

function Page() {
  return (
    <article className="relative mt-[3px] ml-[338px] h-[868px] w-[1112px] bg-white pt-[76px] pl-[107px] font-['Liberation_Sans',Arial,sans-serif] text-[22.4px] text-black shadow-[0_0_5px_rgba(0,0,0,0.55)]">
      <i className="absolute top-[57px] left-[88px] h-[19px] w-[19px] border-r border-b border-[#c4c4c4]" />
      <i className="absolute top-[57px] left-[1006px] h-[19px] w-[19px] border-b border-l border-[#c4c4c4]" />
      <Line w={863} tall={false} lead={<Fit w={25}>24</Fit>}>. On <Sq>POS</Sq> page, sometime it is displaying the word “TAX” and sometime it is displaying </Line>
      <Line w={838}>“<Sq>GST</Sq>” Bug??? It seems very unstable. A lot of time, it is displaying Tax = $0 amount.</Line>
      <Line w={891}>Also, big bug. When I clicked on the table and then next table, the total amount of the first </Line>
      <div className="leading-[26px]">
        <Fit w={484} className="block h-[26px] w-fit bg-[#00ff00] leading-[26px]">table will be display on 2<span className="relative -top-[8px] text-[13px] leading-none">nd</span> table. Really unstable.</Fit>
      </div>
      <div className="mt-[23px]">
        <Line w={454}>25. <Sq>GST</Sq> amount was not shown on all reports</Line>
      </div>
      <div className="mt-6">
        <Line w={646} yellow>26. <a className="text-[#0000ee] underline decoration-[1.5px] underline-offset-2">https://foodorder.rigt.org/staffmember/cash_close_report.php</a> </Line>
        <Line w={878} yellow>Change the report “Cash sales report<span className="-mr-[2.5px]">”</span>, “Card Sales Report<span className="-mr-[2.5px]">”</span>, <Sq>GST</Sq> Reports, Tax Analysis.</Line>
      </div>
      <div className="mt-6">
        <Line w={407} tall={false}>27. Show <Sq>GST</Sq> after Net Total not before.</Line>
      </div>
      <div className="mt-6">
        <Line w={898}>28. In <Sq>POS</Sq> page, previous amount on the table should be cleared after clicking on the next</Line>
        <Line w={137}>table number.</Line>
      </div>
      <div className="mt-6">
        <Line w={889} tall={false}>29. 2 receipts was created in Sales Report after just 1 payment. Then when I click edit on </Line>
        <Line w={381}>the receipt, both receipts disappeared.</Line>
      </div>
    </article>
  );
}

function SideDeck() {
  return (
    <aside className="flex w-[39px] flex-col items-center">
      <Ic className="mt-1.5">
        <path d="M12 3.500v17M3.500 12h17M6 6l12 12M18 6L6 18" stroke="#e2e2e2" strokeWidth="5" strokeLinecap="round" /><circle cx="12" cy="12" r="8.500" fill="#dadada" /><circle cx="12" cy="12" r="5" fill="#9a9a9a" /><circle cx="12" cy="12" r="3.200" fill="#3d3d3d" />
      </Ic>
      <div className="mt-1.5 h-px w-[22px] bg-[#2a2a2a]" />
      <div className="mt-[4px] flex h-8 w-8 items-center justify-center rounded-[4px] border border-[#c8c8c8]">
        <Ic><path d="M3 3h18v18H3z" fill="#ececee" /><rect x="5" y="8.800" width="14" height="6.500" rx="3.200" fill="#3e95ec" /><circle cx="15.800" cy="12" r="3" fill="#fff" stroke="#999" strokeWidth=".6" /></Ic>
      </div>
      <Ic className="mt-[7px]"><path d="M3.500 1.500h17v21h-17z" fill="#e6e6e6" stroke="#777" strokeWidth=".8" /></Ic>
      <Ic className="mt-[11px]"><GlyphText x={8.500} y={14} size={19} stroke="#686868">A</GlyphText><path d="M16 14l8-8" stroke="#c2650d" strokeWidth="2" /><path d="M13 17l4-4" stroke="#ddd" strokeWidth="3" /><path d="M8.500 23q1-5 5-6.500 2 4-5 6.500z" fill="#d653cf" /></Ic>
      <Ic className="mt-[11px]"><path d="M4 2l16 2-2 15-16-2z" fill="#eee" stroke="#888" strokeWidth=".5" /><path d="M3 5.500h19v16H3z" fill="#f5f5f5" stroke="#777" strokeWidth=".5" /><path d="M4.500 7h16v7h-16z" fill="#2f94d8" /><path d="M4.500 14.500h16V20h-16z" fill="#f0bf62" /><path d="M4.500 13.500q8-1.500 16 0v1.500h-16z" fill="#c9ecf9" /><circle cx="8.500" cy="17" r="1.500" fill="#e0441e" /></Ic>
      <Ic className="mt-[11px]"><circle cx="12" cy="12" r="9.500" fill="#46566b" stroke="#c5c5c5" strokeWidth="2" /><path d="M12 7l1.500 3.500L19 12l-5 1.500 1 4-3-2.500-3 2.500 1-4.500-4-2 4.500-.5z" fill="#d8d8d8" /><path d="M15 4.500l-4.500 6L5 8.500l6 4zM13 11l6 3-5-1z" fill="#e02828" /></Ic>
    </aside>
  );
}

function StatusBar() {
  const sep = 'h-[15px] w-px bg-[#353535] ';
  return (
    <footer className="flex h-[21px] shrink-0 items-center border-t border-[#828282] bg-[#3d3d3d] pt-px text-[12px] text-[#e8e8e8]">
      <Fit w={62} className="ml-2.5">Page 6 of 6</Fit>
      <i className={sep + 'ml-[146px]'} />
      <Fit w={155} className="ml-[7px]">771 words, 4,262 characters</Fit>
      <i className={sep + 'ml-[182px]'} />
      <Fit w={72} className="ml-[9px]">Default Style</Fit>
      <i className={sep + 'ml-[153px]'} />
      <Fit w={107} className="ml-[79px]">Multiple Languages</Fit>
      <i className={sep + 'ml-[75px]'} />
      <svg viewBox="0 0 16 12" className="ml-[75px] h-3 w-4"><path d="M0 .5h6M3 .5v10M0 10.500h6M8 9v1.500h2M11 10.500h1.500M14 10.500h1.500" stroke="#999" fill="none" /></svg>
      <svg viewBox="0 0 12 12" className="ml-[14px] mr-px h-3 w-3"><path d="M0 0h12v11H0z" fill="#f2f2f2" /><path d="M4.800 1h2.400v4h2L6 9.500 2.800 5h2z" fill="#e8700e" /></svg>
      <i className={sep + 'ml-2'} />
      <div className="mr-2.5 ml-auto flex items-center">
        <i className={sep} />
        <svg viewBox="0 0 56 12" fill="none" className="ml-3 h-3 w-14" stroke="#8c8c8c">
          <path d="M.5 1.500H5l3 3v6H.5z" stroke="#d35400" /><path d="M14.500 1.500H19l3 3v6h-7.500zM24.500 1.500H29l3 3v6h-7.500z" /><path d="M46.500 10.500h-7.500v-6l3-3h4.500zM46.500 1.500h4l3 3v6h-7z" />
        </svg>
        <i className={sep + 'ml-[7px]'} />
        <svg viewBox="0 0 128 16" className="ml-[9px] h-4 w-32" stroke="#929292" fill="none">
          <path d="M0 8.500h9M117 8.500h9M121.500 4v9" /><path d="M15 8h97" strokeWidth="2" /><path d="M47 5v6" strokeWidth="2" /><circle cx="66" cy="8" r="5" fill="#f2f2f2" stroke="none" />
        </svg>
        <i className={sep + 'ml-1'} />
        <Fit w={31} className="ml-2">140%</Fit>
      </div>
    </footer>
  );
}

export default function App() {
  return (
    <div className="flex h-[1080px] w-[1920px] flex-col overflow-hidden bg-[#3d3d3d] font-['Noto_Sans',sans-serif] text-[#f0f0f0]">
      <TopBar />
      <div className="flex min-h-0 flex-1">
        <Dock />
        <main className="flex min-w-0 flex-1 flex-col">
          <TitleBar />
          <MenuBar />
          <StandardBar />
          <FormatBar />
          <div className="flex min-h-0 flex-1">
            <div className="relative w-[1789px] overflow-hidden pt-1">
              <i className="absolute top-[9px] left-2 h-[6px] w-[7px] border-b-2 border-l-2 border-[#9c9c9c]" />
              <Ruler />
              <Page />
            </div>
            <div className="flex w-3 flex-col justify-end bg-[#383838] pb-[68px]">
              <i className="mr-0.5 ml-auto h-[74px] w-1.5 rounded-full bg-[#b0b0b0]" />
            </div>
            <div className="mr-px flex flex-1 border-t-2 border-b-2 border-[#858585]">
              <div className="flex w-2 items-center border-r-2 border-l-2 border-[#858585]">
                <svg viewBox="0 0 8 74" className="-ml-0.5 h-[74px] w-2 shrink-0"><path d="M0 0h8v74H0z" fill="#858585" /><path d="M2.500 33.500v7l4-3.500z" fill="#222" /></svg>
              </div>
              <SideDeck />
            </div>
          </div>
          <StatusBar />
        </main>
      </div>
    </div>
  );
}
